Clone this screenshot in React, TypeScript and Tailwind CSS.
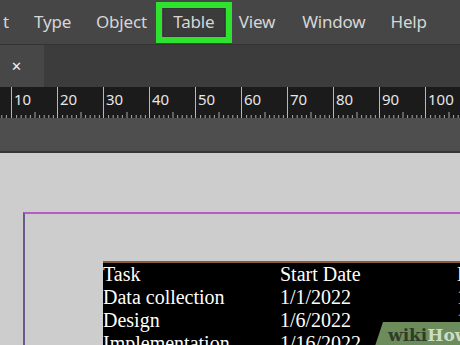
import React from "react";

function Ticks() {
  const lines = [];
  for (let i = 1; i < 10; i++) {
    const x = i * 4.6;
    const h = i === 5 ? 6 : 3;
    lines.push(<line key={i} x1={x} x2={x} y1={8 - h} y2={8} stroke="#a8a8a8" strokeWidth="1" />);
  }
  return (
    <svg width="46" height="8" className="block">
      {lines}
    </svg>
  );
}

const rows = [
  ["Task", "Start Date", "E"],
  ["Data collection", "1/1/2022", "1"],
  ["Design", "1/6/2022", "1"],
  ["Implementation", "1/16/2022", "1"],
];

export default function App() {
  const nums = [10, 20, 30, 40, 50, 60, 70, 80, 90, 100];
  return (
    <div className="w-[460px] h-[345px] overflow-hidden flex flex-col bg-[#cdcdcd]" style={{ fontFamily: "'Noto Sans', 'Open Sans', sans-serif" }}>
      {/* menu bar */}
      <div className="h-[44px] bg-[#464646] flex items-center text-[17px] tracking-[-0.2px] text-[#d6d6d6] shrink-0">
        <div className="w-[9px] overflow-hidden flex justify-end mr-[25px]"><span>t</span></div>
        <span className="mr-[25px]">Type</span>
        <span className="mr-[9px]">Object</span>
        <div className="w-[76px] h-[41px] border-[6px] border-[#2fe22f] flex items-center justify-center mr-[7px]">
          <div className="w-[62px] h-[29px] bg-[#3b3b3b] border border-[#333] flex items-center justify-center leading-none pb-[1px]">Table</div>
        </div>
        <span className="mr-[27px]">View</span>
        <span className="mr-[25px]">Window</span>
        <span>Help</span>
      </div>
      {/* tab row */}
      <div className="h-[43px] bg-[#3c3c3c] border-t border-[#333] flex shrink-0">
        <div className="w-[44px] bg-[#474747] flex items-center pl-[11px] text-[#f0f0f0] text-[13px] leading-none">✕</div>
      </div>
      {/* ruler */}
      <div className="h-[31px] bg-[#1b1b1b] flex shrink-0 overflow-hidden">
        <div className="w-[11px] shrink-0 flex flex-col justify-end overflow-hidden">
          <div className="-ml-[35px]"><Ticks /></div>
        </div>
        {nums.map((n) => (
          <div key={n} className="w-[46px] shrink-0 border-l border-[#b8b8b8] flex flex-col justify-between">
            <span className="text-[15px] leading-none text-[#e6e6e6] pl-[2px] pt-[5px]" style={{ fontFamily: "'Noto Sans', sans-serif" }}>{n}</span>
            <Ticks />
          </div>
        ))}
      </div>
      {/* below ruler */}
      <div className="h-[35px] bg-[#4e4e4e] border-b-2 border-[#363636] shrink-0" />
      {/* canvas */}
      <div className="flex-1 pl-[23px] pt-[59px] flex">
        <div className="flex-1 border-l-2 border-t-2 border-l-[#6a5a8a] border-t-[#b35ec4] pl-[78px] pt-[47px]">
          <div className="bg-black border-t-2 border-[#8a5a3c] relative" style={{ fontFamily: "'Liberation Serif', serif" }}>
            {rows.map((r, i) => (
              <div key={i} className="flex h-[23px] items-center pb-[2px] text-white text-[20px] leading-none">
                <span className="w-[177px] shrink-0">{r[0]}</span>
                <span className="w-[177px] shrink-0">{r[1]}</span>
                <span>{r[2]}</span>
              </div>
            ))}
            <div className="absolute left-[270px] top-[59px] w-[100px] h-[30px] bg-[#6d8c5c] flex items-start pl-[15px] pt-[5px]" style={{ clipPath: "polygon(10px 0, 100% 0, 100% 100%, 0 100%)" }}>
              <span className="text-[17px] font-bold leading-none whitespace-nowrap" style={{ fontFamily: "'DejaVu Serif', serif" }}>
                <span className="text-[#2e3d25]">wiki</span><span className="text-[#cfdcc4]">How</span>
              </span>
            </div>
          </div>
        </div>
      </div>
    </div>
  );
}
